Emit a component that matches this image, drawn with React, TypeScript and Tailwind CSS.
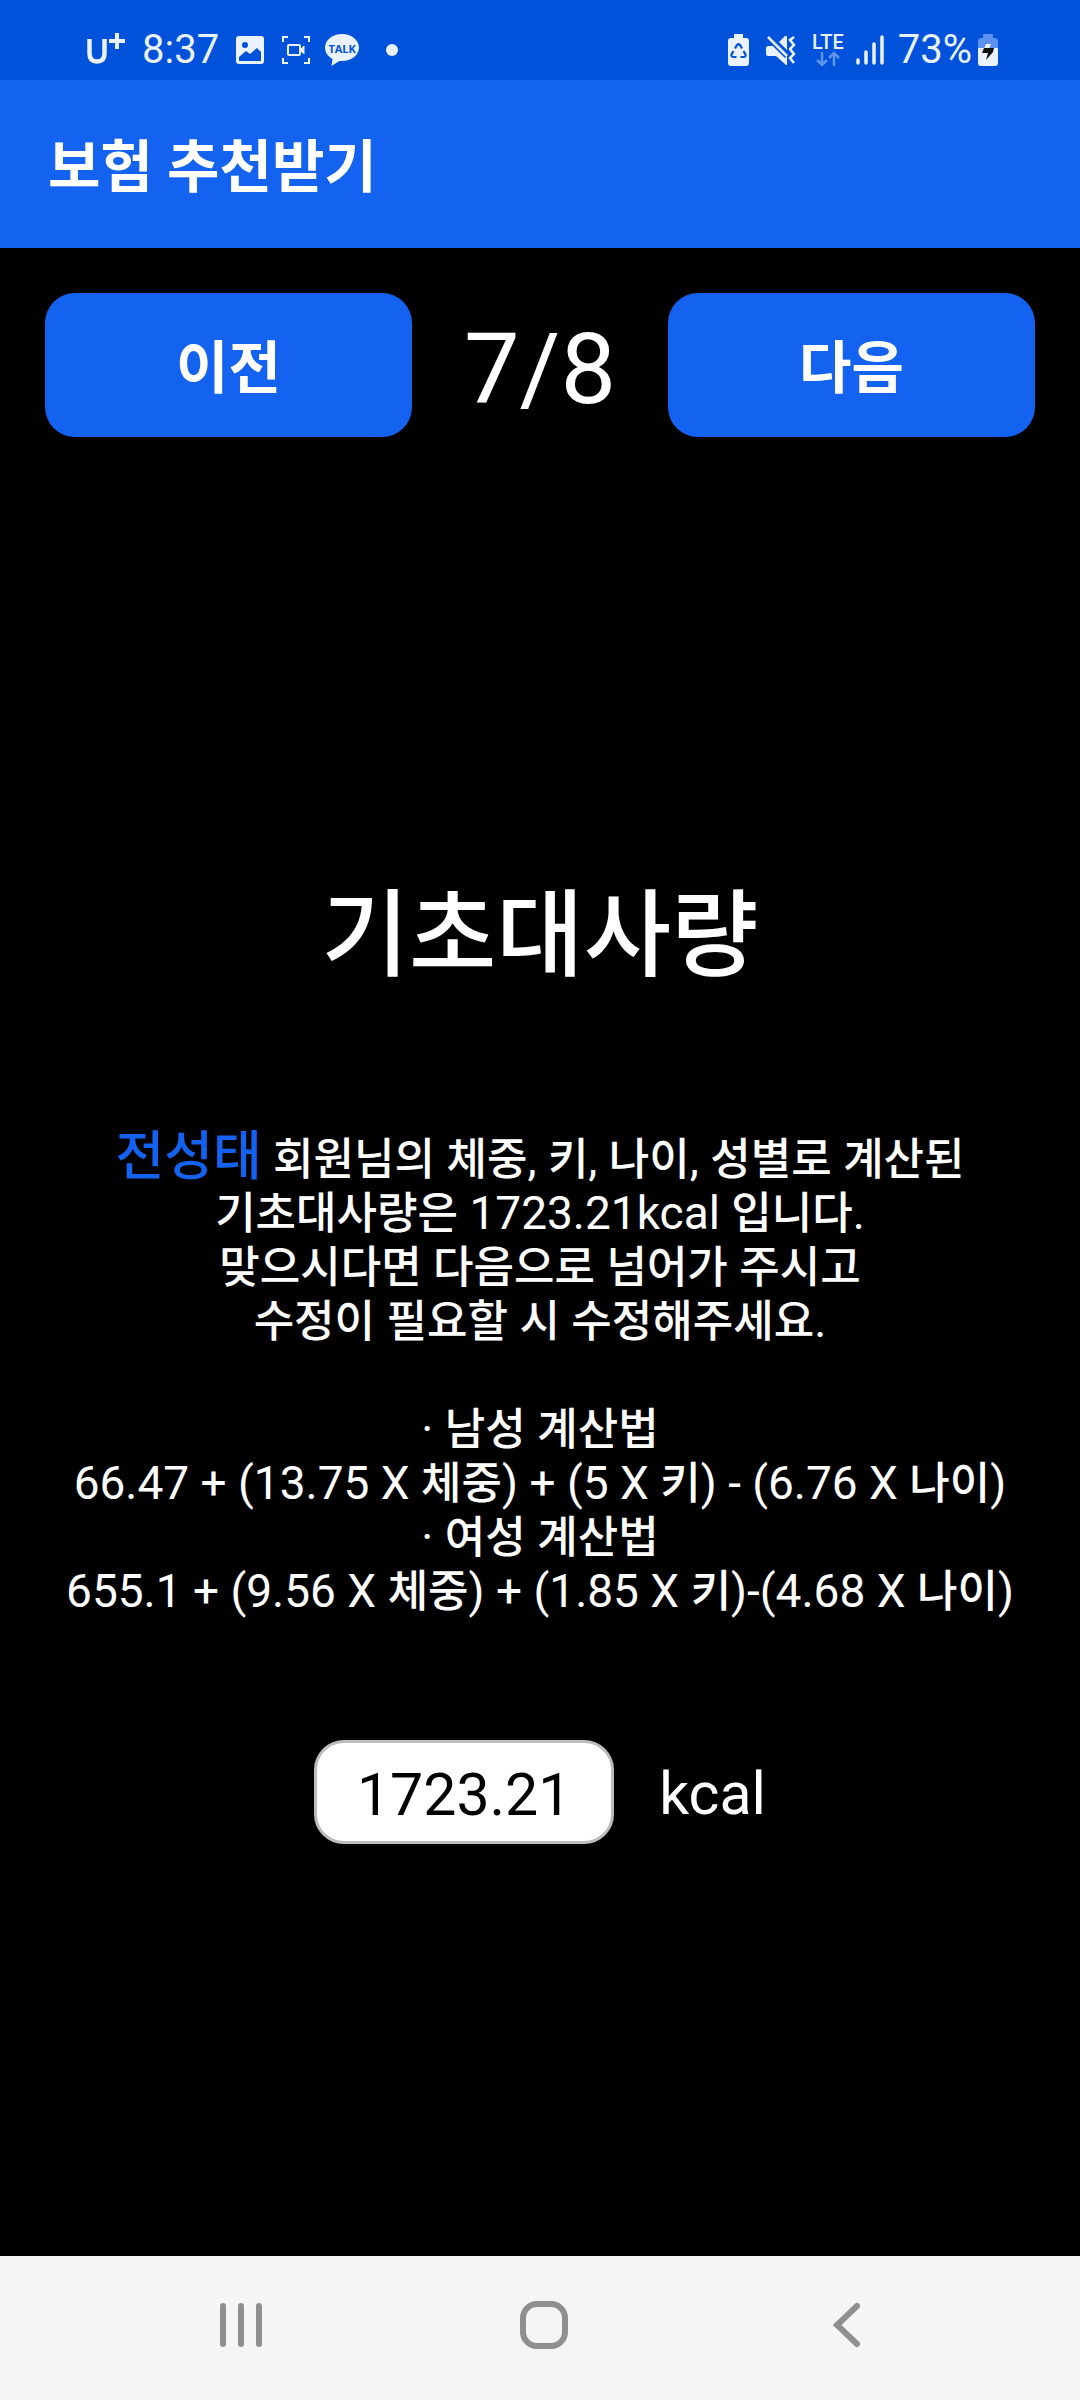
import React from "react";

function StatusBar() {
  return (
    <div className="flex h-20 items-center justify-between bg-[#0052db] pl-[85px] pr-[82px] pt-5 text-[#eaf1ff]">
      <div className="flex items-center">
        <svg className="h-[36px] w-[42px]" viewBox="0 0 42 36" fill="none" stroke="currentColor" aria-label="U+">
          <path d="M4.500 7v14.500q0 8 7.500 8t7.500-8V7" strokeWidth="4.500" />
          <path d="M32 1v16M24 9h16" strokeWidth="4" />
        </svg>
        <span className="ml-[15px] text-[40px] leading-[44px]">8:37</span>
        <svg className="ml-[17px] h-[28px] w-[28px]" viewBox="0 0 28 28" aria-label="사진">
          <rect width="28" height="28" rx="3" fill="currentColor" />
          <circle cx="9" cy="9" r="3" fill="#0052db" />
          <path d="M3 21l7-6 4 3 7-6 4 4v9H3z" fill="#0052db" />
        </svg>
        <svg className="ml-[18px] h-[28px] w-[28px]" viewBox="0 0 28 28" fill="none" stroke="currentColor" strokeWidth="2" aria-label="화면 녹화">
          <path d="M1 6V1h5M22 1h5v5M27 22v5h-5M6 27H1v-5" />
          <rect x="6" y="9" width="12" height="10" rx="1" />
          <path d="M18 14l4-4v8z" fill="currentColor" strokeWidth="1" />
        </svg>
        <span className="relative ml-[15px] flex h-8 w-[34px] items-start justify-center">
          <svg className="absolute inset-0 h-8 w-[34px]" viewBox="0 0 34 32" fill="currentColor" aria-hidden="true">
            <path d="M17 0C7.600 0 0 6 0 13.500 0 18.500 3 22.500 7.500 25L6.500 32l8-5 2.500.1c9.400 0 17-6 17-13.600S26.400 0 17 0z" />
          </svg>
          <span className="relative font-['Open_Sans'] text-[11px] font-bold leading-[29px] text-[#0052db]">TALK</span>
        </span>
        <span className="ml-[27px] size-3 rounded-full bg-current" />
      </div>
      <div className="flex items-center">
        <svg className="h-8 w-[21px]" viewBox="0 0 21 32" aria-label="배터리 보호">
          <path d="M6 0h9v4h3q3 0 3 3v22q0 3-3 3H3q-3 0-3-3V7q0-3 3-3h3z" fill="currentColor" />
          <g fill="none" stroke="#0052db" strokeWidth="2.200">
            <path d="M7 14.500l2-3.500q1.500-1.500 3 0l2 3.500M15.500 17l2 3.500q.5 2.500-2 2.500h-3M8.500 23h-3q-2.500 0-2-2.500l2-3.500" />
          </g>
        </svg>
        <svg className="ml-[17px] h-[30px] w-[30px]" viewBox="0 0 30 30" aria-label="진동">
          <path d="M0 13q0-2 2-2h5l4-3 10 10v12h-1l-10-9H2q-2 0-2-2zM21 1v14l-8-8 6-6z" fill="currentColor" />
          <path d="M2 2l19 19" stroke="#0052db" strokeWidth="6" />
          <path d="M2 2l19 19M28 2l-4 3 4 5-4 4 4 5-4 4 4 5" fill="none" stroke="currentColor" strokeWidth="2.500" />
        </svg>
        <span className="ml-4 flex flex-col items-center">
          <span className="text-[20px] font-medium leading-[18px]">LTE</span>
          <svg className="h-4 w-6" viewBox="0 0 24 16" fill="none" stroke="#6095ef" strokeWidth="2.500" aria-hidden="true">
            <path d="M6 1v13M1 9l5 5 5-5M18 15V2M13 7l5-5 5 5" />
          </svg>
        </span>
        <svg className="ml-3 h-[30px] w-[28px]" viewBox="0 0 28 30" stroke="currentColor" strokeWidth="3.500" strokeLinecap="round" aria-label="신호">
          <path d="M2 25v3M10 17v11M18 9v19M26 2v26" />
        </svg>
        <span className="ml-[14px] text-[40px] leading-[44px]">73%</span>
        <svg className="ml-[6px] h-8 w-5" viewBox="0 0 20 32" aria-label="충전 중">
          <path d="M5 0h10v4h2q3 0 3 3v7H0V7q0-3 3-3h2z" fill="#5c90ee" />
          <path d="M0 14h20v15q0 3-3 3H3q-3 0-3-3z" fill="currentColor" />
          <path d="M8 10h5l-2 5h-5z" fill="#eaf1ff" />
          <path d="M6 14h10l-1 4-7 8 2-7H4z" fill="#111" />
        </svg>
      </div>
    </div>
  );
}

function StepButton({ children }: { children: React.ReactNode }) {
  return (
    <button type="button" className="h-36 flex-1 rounded-[30px] bg-[#1363f0] pt-2 text-[57px] font-bold leading-[84px] text-white">
      {children}
    </button>
  );
}

/* Sets Hangul runs in a medium weight beside regular Latin text and digits. */
function MixedText({ text }: { text: string }) {
  return (
    <>
      {text.split(/([가-힣]+)/).map((run, i) =>
        /[가-힣]/.test(run) ? (
          <span key={i} className="text-[44px] font-medium leading-none">
            {run}
          </span>
        ) : (
          run
        ),
      )}
    </>
  );
}

const lines = [
  "기초대사량은 1723.21kcal 입니다.",
  "맞으시다면 다음으로 넘어가 주시고",
  "수정이 필요할 시 수정해주세요.",
  "",
  "· 남성 계산법",
  "66.47 + (13.75 X 체중) + (5 X 키) - (6.76 X 나이)",
  "· 여성 계산법",
  "655.1 + (9.56 X 체중) + (1.85 X 키)-(4.68 X 나이)",
];

function NavigationBar() {
  return (
    <nav className="flex h-36 items-center justify-center gap-[3px] bg-[#f5f5f5] pb-[6px] pl-2 text-[#8f8f8f]">
      <button type="button" aria-label="최근 앱" className="flex w-[28%] items-center justify-center">
        <svg className="h-[46px] w-[46px]" viewBox="0 0 46 46" stroke="currentColor" strokeWidth="6" strokeLinecap="round">
          <path d="M5 4v38M23 4v38M41 4v38" />
        </svg>
      </button>
      <button type="button" aria-label="홈" className="flex w-[28%] items-center justify-center">
        <svg className="h-12 w-12" viewBox="0 0 48 48" fill="none" stroke="currentColor" strokeWidth="6">
          <rect x="3" y="3" width="42" height="42" rx="14" />
        </svg>
      </button>
      <button type="button" aria-label="뒤로" className="flex w-[28%] items-center justify-center">
        <svg className="h-[46px] w-[28px]" viewBox="0 0 28 46" fill="none" stroke="currentColor" strokeWidth="6" strokeLinecap="round">
          <path d="M24 4L4 23l20 19" />
        </svg>
      </button>
    </nav>
  );
}

export default function App() {
  return (
    <div className="flex min-h-screen flex-col bg-black font-['Roboto','Noto_Sans_CJK_KR',sans-serif] text-white">
      <StatusBar />
      <header className="flex h-[168px] items-center bg-[#1363f0] px-12 pt-2">
        <h1 className="text-[57px] font-bold leading-[84px]">보험 추천받기</h1>
      </header>
      <div className="flex items-center px-[45px] pt-[45px]">
        <StepButton>이전</StepButton>
        <span className="w-64 pt-2 text-center text-[99px] leading-[116px]">7/8</span>
        <StepButton>다음</StepButton>
      </div>
      <main className="flex flex-1 flex-col items-center justify-center pt-[18px]">
        <h2 className="text-[95px] font-medium leading-[140px]">기초대사량</h2>
        <p className="mt-[124px] text-center text-[46px] leading-[54px]">
          <span className="text-[53px] font-medium leading-none text-[#1363f0]">전성태</span>
          <MixedText text=" 회원님의 체중, 키, 나이, 성별로 계산된" />
          {lines.map((line, i) => (
            <React.Fragment key={i}>
              <br />
              <MixedText text={line} />
            </React.Fragment>
          ))}
        </p>
        <div className="mt-[122px] flex items-center gap-[45px]">
          <input
            type="text"
            id="bmr"
            defaultValue="1723.21"
            className="h-[104px] w-[300px] rounded-[30px] border-[3px] border-[#bdbdbd] bg-white pt-1 text-center text-[59px] text-black"
          />
          <label htmlFor="bmr" className="pt-1 text-[59px] leading-[72px]">
            kcal
          </label>
        </div>
      </main>
      <NavigationBar />
    </div>
  );
}
